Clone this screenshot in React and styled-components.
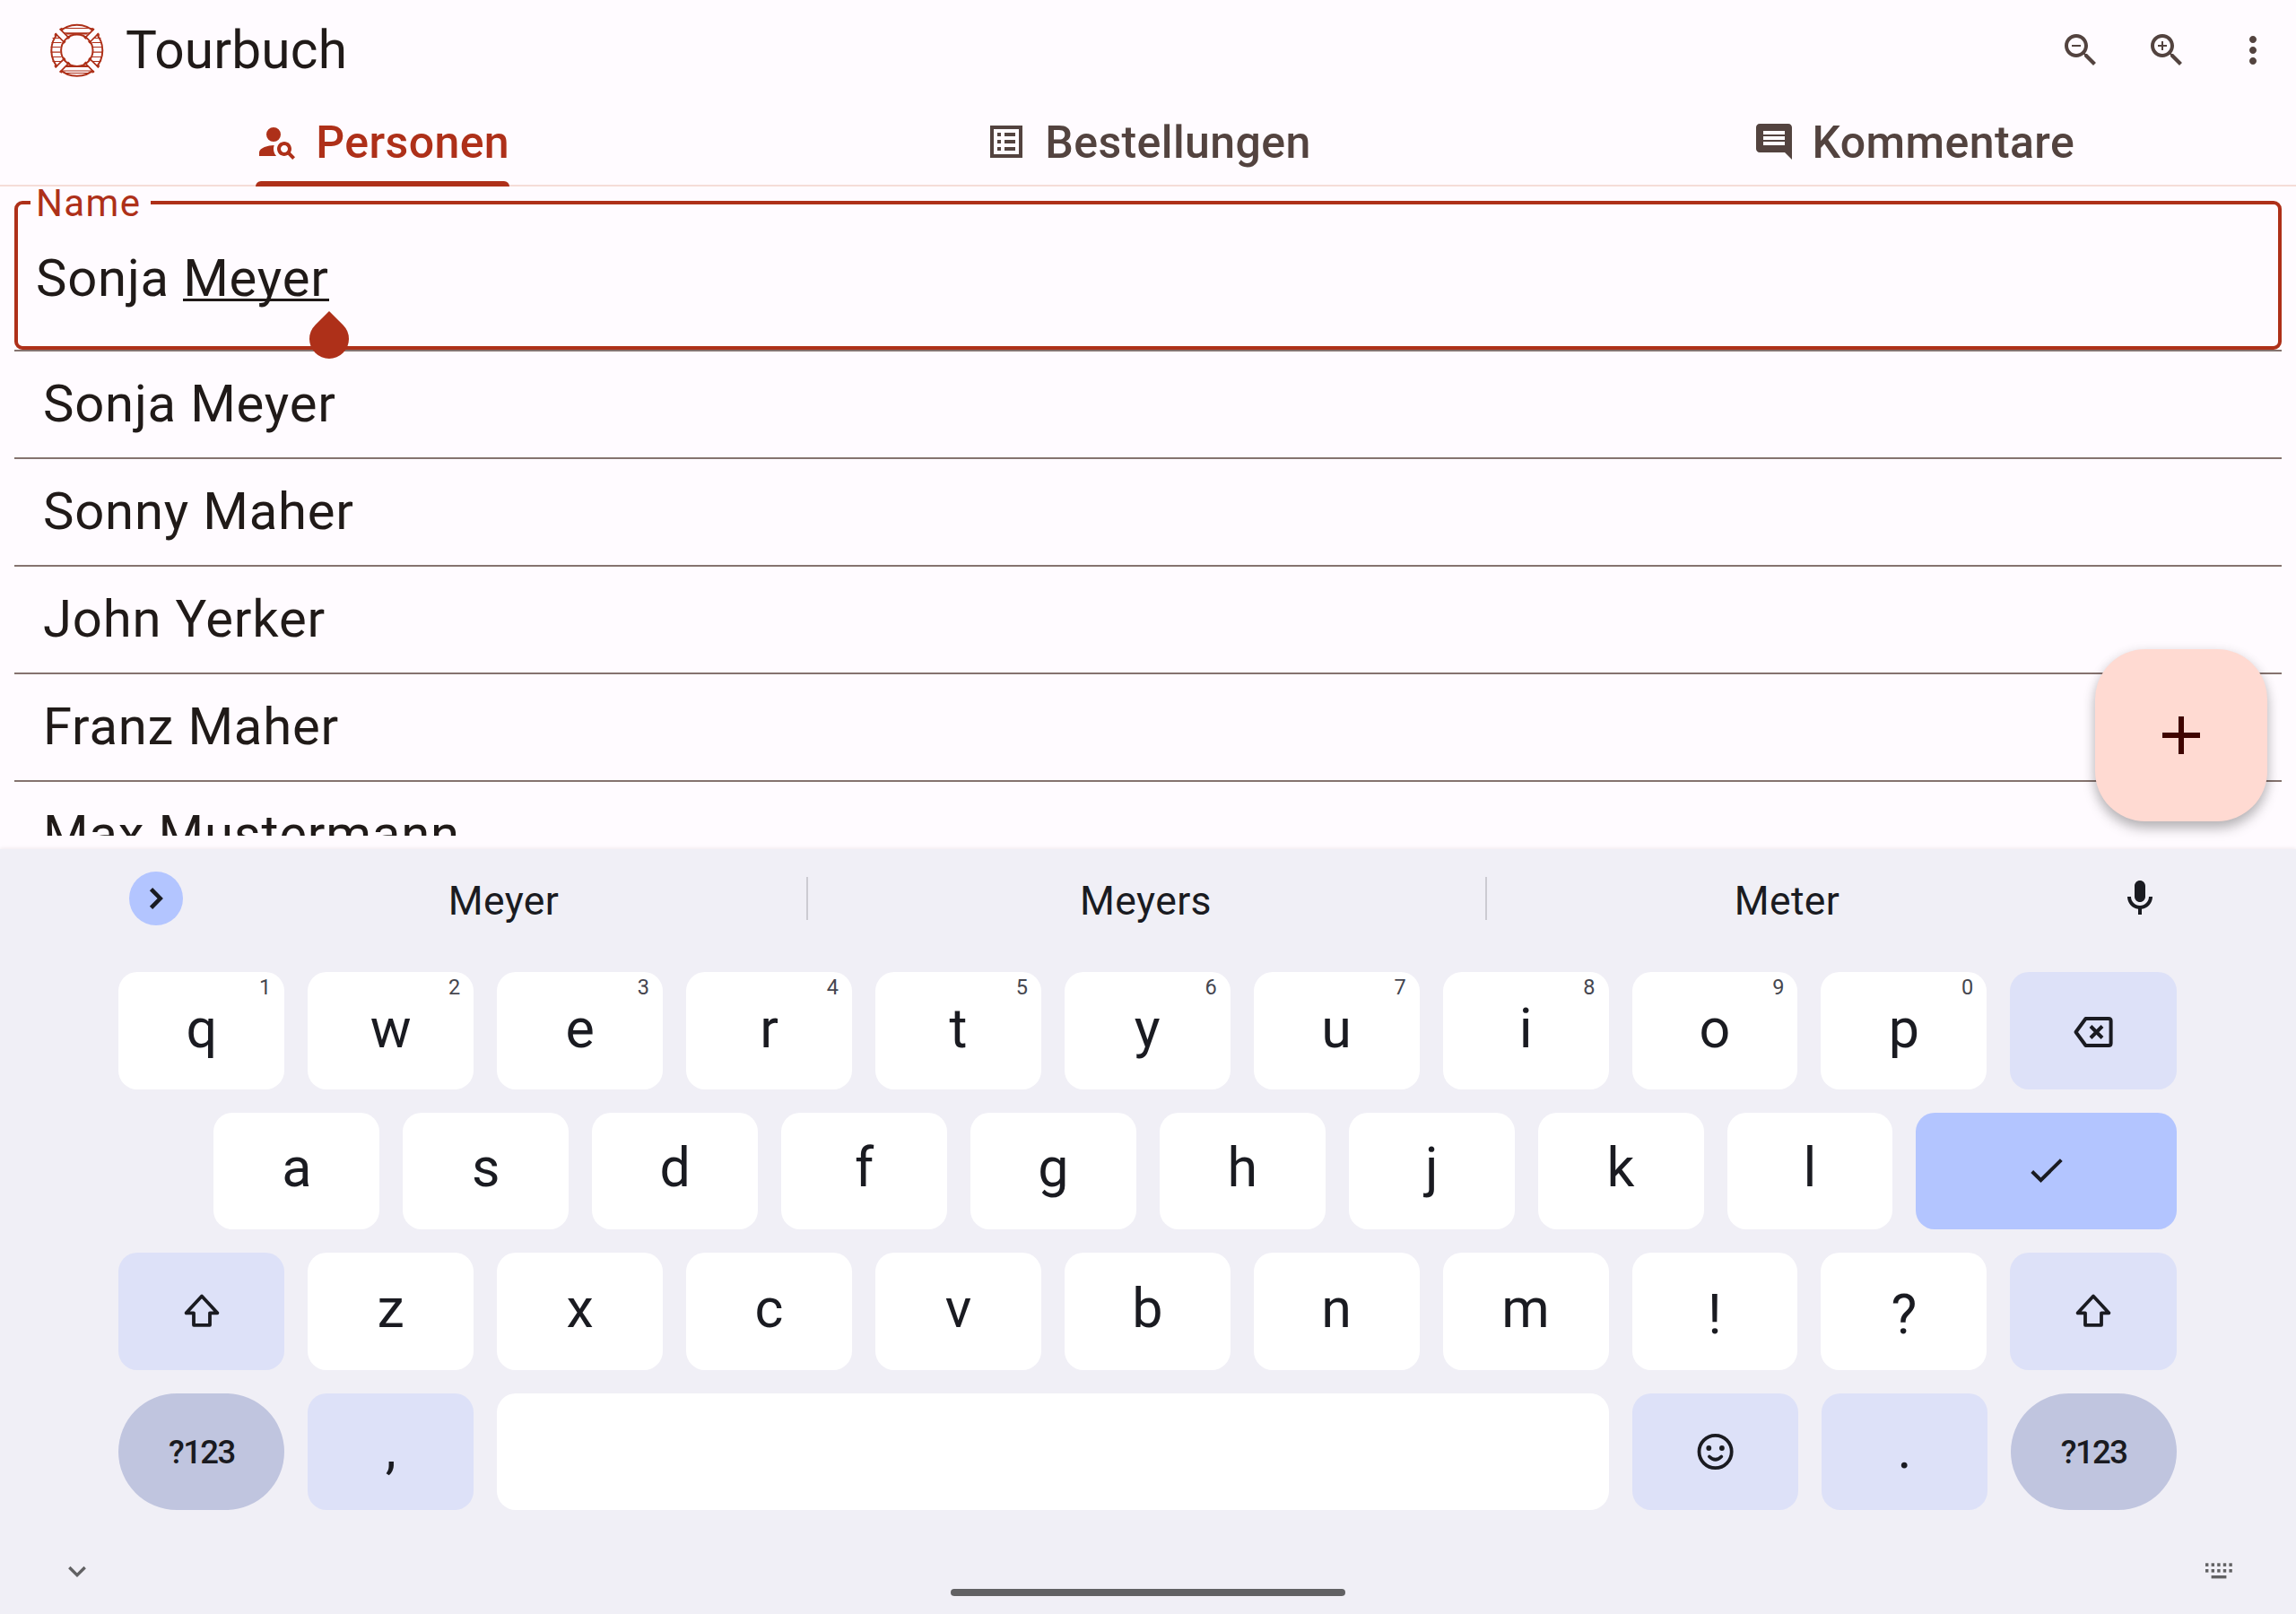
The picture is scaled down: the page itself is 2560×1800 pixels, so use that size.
import React from "react";
import styled, { createGlobalStyle, css } from "styled-components";

const c = {
  surface: "#fffbff",
  ink: "#201a18",
  muted: "#53433f",
  primary: "#ae3019",
  outline: "#85736f",
  divider: "#f5ddd8",
  fab: "#ffdad2",
  onFab: "#3f0400",
  kbBg: "#f0eff6",
  key: "#ffffff",
  keySoft: "#dde1f8",
  keyAccent: "#b3c5ff",
  keyDim: "#c0c5df",
  keyInk: "#1a1b21",
  hint: "#45464f",
  nav: "#616163",
};

const GlobalStyle = createGlobalStyle`
  html, body { margin: 0; padding: 0; }
  *, *::before, *::after { box-sizing: border-box; }
  body { font-family: Roboto, "Liberation Sans", sans-serif; color: ${c.ink}; background: ${c.surface}; }
  svg { display: block; flex: none; }
`;

const Screen = styled.div`
  width: 2560px;
  height: 1800px;
  display: flex;
  flex-direction: column;
  overflow: hidden;
  background: ${c.surface};
`;

const TopBar = styled.header`
  height: 112px;
  flex: none;
  display: flex;
  align-items: center;
  padding: 0 0 0 45px;
`;

const Title = styled.h1`
  margin: 0 0 0 14px;
  flex: 1;
  font-size: 58.6px;
  font-weight: 400;
  letter-spacing: 0.15px;
  line-height: 76px;
`;

const Action = styled.button`
  width: 96px;
  height: 96px;
  border: 0;
  padding: 0;
  background: none;
  color: ${c.muted};
  display: flex;
  align-items: center;
  justify-content: center;
`;

const Tabs = styled.nav`
  height: 96px;
  flex: none;
  display: grid;
  grid-template-columns: repeat(3, 1fr);
  border-bottom: 2px solid ${c.divider};
`;

const Tab = styled.div`
  display: flex;
  justify-content: center;
  height: 96px;
  color: ${(p) => (p.$active ? c.primary : c.muted)};
`;

const TabContent = styled.div`
  display: flex;
  align-items: center;
  gap: 19px;
  height: 96px;
  padding-bottom: 4px;
  font-size: 50px;
  font-weight: 500;
  letter-spacing: 0.4px;
  position: relative;
  ${(p) =>
    p.$active &&
    css`
      &::after {
        content: "";
        position: absolute;
        left: 0;
        right: 0;
        bottom: 0;
        height: 6px;
        border-radius: 6px 6px 0 0;
        background: ${c.primary};
      }
    `}
`;

const TabLabel = styled.span`
  padding-top: 2px;
`;

const Content = styled.main`
  position: relative;
  height: 739px;
  flex: none;
  display: flex;
  flex-direction: column;
  padding: 16px 16px 15px;
`;

const Field = styled.div`
  position: relative;
  height: 166px;
  flex: none;
  display: flex;
  align-items: center;
  padding: 6px 0 0 20px;
  border: 4px solid ${c.primary};
  border-radius: 9px;
  font-size: 58px;
  letter-spacing: 0.8px;
`;

const FieldLabel = styled.label`
  position: absolute;
  left: 14px;
  top: -18px;
  width: 134px;
  height: 34px;
  padding-left: 6px;
  background: ${c.surface};
  color: ${c.primary};
  font-size: 42px;
  line-height: 34px;
  letter-spacing: 1.4px;
`;

const FieldText = styled.span`
  white-space: pre;
`;

const Composing = styled.span`
  position: relative;
  display: inline-block;
  &::after {
    content: "";
    position: absolute;
    left: 0;
    right: 0;
    bottom: 8px;
    height: 3px;
    background: ${c.ink};
  }
`;

const CursorHandle = styled.i`
  position: absolute;
  left: 100%;
  top: 80px;
  width: 44px;
  height: 44px;
  margin-left: -22px;
  border-radius: 0 50% 50% 50%;
  background: ${c.primary};
  transform: rotate(45deg);
  z-index: 2;
`;

const List = styled.ul`
  list-style: none;
  margin: 0;
  padding: 0;
  flex: 1;
  min-height: 0;
  overflow: hidden;
`;

const Row = styled.li`
  height: 120px;
  display: flex;
  align-items: center;
  padding: 0 0 2px 32px;
  border-top: 2px solid ${c.outline};
  font-size: 58px;
  letter-spacing: 0.8px;
`;

const Fab = styled.button`
  position: absolute;
  right: 32px;
  top: 516px;
  width: 192px;
  height: 192px;
  padding: 0;
  border: 0;
  border-radius: 56px;
  background: ${c.fab};
  color: ${c.onFab};
  display: flex;
  align-items: center;
  justify-content: center;
  box-shadow: 0 8px 14px rgba(0, 0, 0, 0.25), 0 2px 14px rgba(0, 0, 0, 0.08);
`;

const Keyboard = styled.section`
  flex: 1;
  display: flex;
  flex-direction: column;
  background: ${c.kbBg};
  color: ${c.keyInk};
  box-shadow: 0 -1px 4px rgba(60, 20, 20, 0.08);
  position: relative;
`;

const Suggestions = styled.div`
  height: 137px;
  flex: none;
  display: flex;
  padding: 25px 133px 0 144px;
`;

const Expand = styled.button`
  width: 60px;
  height: 60px;
  margin-right: 22px;
  padding: 0 0 0 2px;
  border: 0;
  border-radius: 50%;
  background: ${c.keyAccent};
  color: ${c.keyInk};
  display: flex;
  align-items: center;
  justify-content: center;
`;

const Suggestion = styled.div`
  width: ${(p) => p.$w}px;
  height: 65px;
  text-align: center;
  font-size: 44.5px;
  letter-spacing: 0.4px;
  line-height: 65px;
  padding: 1px 2px 0 0;
`;

const Separator = styled.div`
  width: 2px;
  height: 48px;
  margin-top: 6px;
  background: #cccbd2;
`;

const Mic = styled.div`
  margin: 6px 0 0 33px;
`;

const Keys = styled.div`
  height: 600px;
  flex: none;
  display: flex;
  flex-direction: column;
  gap: 26px;
  padding: 0 133px 0 132.4px;
`;

const KeyRow = styled.div`
  flex: 1;
  display: flex;
  gap: 26px;
  padding-left: ${(p) => (p.$indent ? 106 : 0)}px;
`;

const toneBg = { plain: c.key, soft: c.keySoft, accent: c.keyAccent, dim: c.keyDim };

const Key = styled.button`
  position: relative;
  flex: ${(p) => (p.$grow ? "1 1 0" : "none")};
  width: 184.9px;
  padding: ${(p) => (p.$drop > 0 ? p.$drop : 0)}px 0 ${(p) => (p.$drop < 0 ? -p.$drop : 0)}px;
  border: 0;
  border-radius: ${(p) => (p.$tone === "dim" ? 66 : 21)}px;
  background: ${(p) => toneBg[p.$tone || "plain"]};
  color: ${c.keyInk};
  font-family: inherit;
  font-size: 61px;
  line-height: 72px;
  display: flex;
  align-items: center;
  justify-content: center;
`;

const Hint = styled.span`
  position: absolute;
  top: 4px;
  right: 15px;
  font-size: 23.5px;
  line-height: 26px;
  color: ${c.hint};
`;

const ModeLabel = styled.span`
  font-size: 36.5px;
  font-weight: 500;
  letter-spacing: -1.6px;
`;

const NavBar = styled.footer`
  flex: 1;
  display: flex;
  justify-content: space-between;
  padding: 53px 68px 0 68px;
  color: ${c.nav};
`;

const HomePill = styled.div`
  width: 440px;
  height: 8px;
  margin-top: 35px;
  border-radius: 4px;
  background: ${c.nav};
`;

const Glyph = ({ d, size = 48, box = "0 0 24 24" }) => (
  <svg width={size} height={size} viewBox={box} fill="currentColor">
    <path d={d} fillRule="evenodd" />
  </svg>
);

const icons = {
  person:
    "M10 4a4 4 0 1 0 0 8 4 4 0 0 0 0-8zM10.35 14.01C7.62 13.91 2 15.27 2 18v2h9.54c-2.47-2.76-1.23-5.89-1.19-5.99zM19.43 18.02c.36-.59.57-1.28.57-2.02 0-2.21-1.79-4-4-4s-4 1.79-4 4 1.79 4 4 4c.74 0 1.43-.22 2.02-.57L20.59 22 22 20.59l-2.57-2.57zM16 18c-1.1 0-2-.9-2-2s.9-2 2-2 2 .9 2 2-.9 2-2 2z",
  list: "M3 3h18v18H3zM5 5v14h14V5zM7 7h2v2H7zM11 7h6v2h-6zM7 11h2v2H7zM11 11h6v2h-6zM7 15h2v2H7zM11 15h6v2h-6z",
  comment:
    "M21.99 4c0-1.1-.89-2-1.99-2H4c-1.1 0-2 .9-2 2v12c0 1.1.9 2 2 2h14l4 4-.01-18zM18 14H6v-2h12v2zm0-3H6V9h12v2zm0-3H6V6h12v2z",
  zoomOut:
    "M15.5 14h-.79l-.28-.27C15.41 12.59 16 11.11 16 9.5 16 5.91 13.09 3 9.5 3S3 5.91 3 9.5 5.91 16 9.5 16c1.61 0 3.09-.59 4.23-1.57l.27.28v.79l5 4.99L20.49 19l-4.99-5zm-6 0C7.01 14 5 11.99 5 9.5S7.01 5 9.5 5 14 7.01 14 9.5 11.99 14 9.5 14zM7 9h5v1H7z",
  zoomIn:
    "M15.5 14h-.79l-.28-.27C15.41 12.59 16 11.11 16 9.5 16 5.91 13.09 3 9.5 3S3 5.91 3 9.5 5.91 16 9.5 16c1.61 0 3.09-.59 4.23-1.57l.27.28v.79l5 4.99L20.49 19l-4.99-5zm-6 0C7.01 14 5 11.99 5 9.5S7.01 5 9.5 5 14 7.01 14 9.5 11.99 14 9.5 14zM7 9h2V7h1v2h2v1h-2v2H9v-2H7z",
  more: "M12 8c1.1 0 2-.9 2-2s-.9-2-2-2-2 .9-2 2 .9 2 2 2zm0 2c-1.1 0-2 .9-2 2s.9 2 2 2 2-.9 2-2-.9-2-2-2zm0 6c-1.1 0-2 .9-2 2s.9 2 2 2 2-.9 2-2-.9-2-2-2z",
  plus: "M19 13h-6v6h-2v-6H5v-2h6V5h2v6h6v2z",
  mic: "M12 14c1.66 0 3-1.34 3-3V5c0-1.66-1.34-3-3-3S9 3.34 9 5v6c0 1.66 1.34 3 3 3zM17 11c0 2.76-2.24 5-5 5s-5-2.24-5-5H5c0 3.53 2.61 6.43 6 6.92V21h2v-3.08c3.39-.49 6-3.39 6-6.92z",
};

const Line = ({ w, h, sw = 4, children, cap = "butt", join = "miter" }) => (
  <svg
    width={w}
    height={h}
    viewBox={`0 0 ${w} ${h}`}
    fill="none"
    stroke="currentColor"
    strokeWidth={sw}
    strokeLinecap={cap}
    strokeLinejoin={join}
  >
    {children}
  </svg>
);

const ShiftIcon = () => (
  <Line w={44} h={44} sw={3.8} join="round">
    <path d="M22 5.5 4.6 24.3H13V37.8H31V24.3H39.4Z" />
  </Line>
);

const BackspaceIcon = () => (
  <Line w={46} h={38} join="round">
    <path d="M14.5 4H40Q42.6 4 42.6 6.5V31.5Q42.6 34 40 34H14.5L3.5 19Z" />
    <path d="M20 12.5 33 25.5M33 12.5 20 25.5" />
  </Line>
);

const CheckIcon = () => (
  <Line w={40} h={32} sw={4}>
    <path d="M3.7 16.5 13.5 26.2 36.3 3.6" />
  </Line>
);

const EmojiIcon = () => (
  <Line w={44} h={44} sw={3.8} cap="round">
    <circle cx="21.6" cy="22" r="18.1" />
    <circle cx="14.3" cy="18" r="2.9" fill="currentColor" stroke="none" />
    <circle cx="28.9" cy="18" r="2.9" fill="currentColor" stroke="none" />
    <path d="M14.9 27.5Q21.6 34 28.3 27.5" />
  </Line>
);

const Lifebuoy = () => (
  <svg width="81" height="80" viewBox="0 0 80 80" fill="none" stroke={c.primary}>
    <g strokeWidth="1.2">
      <path d="M24 15.5H57M22 20.8H59M28 21.8H52" />
      <path d="M13 26.5H25M12 31.5H23M11 36.5H22M11 42.2H22M12 47.5H23M13 52.5H26" />
      <path d="M55 26.5H67M57 31.5H68M58 36.5H69M58 42.2H69M57 47.5H68M54 52.5H67" />
      <path d="M28 57.500H52M22 58.500H59M23 63H57M27 65.500H54" />
    </g>
    <circle cx="40.3" cy="40.3" r="28.500" strokeWidth="2" />
    <circle cx="40.3" cy="40.3" r="17.700" fill={c.surface} strokeWidth="2" />
    {[45, 135, 225, 315].map((a) => (
      <g key={a} transform={`rotate(${a} 40.3 40.3)`}>
        <rect x="59" y="37.3" width="12" height="6" fill={c.surface} stroke="none" />
        <path d="M56 36.700H71M56 43.900H71" strokeWidth="1.700" />
        <path d="M56.800 35V38.600M56.800 42V45.600M69.800 34.500V37.500M69.800 43.100V46.100" strokeWidth="1.700" />
      </g>
    ))}
  </svg>
);

const people = ["Sonja Meyer", "Sonny Maher", "John Yerker", "Franz Maher", "Max Mustermann"];

export default function App() {
  return (
    <>
      <GlobalStyle />
      <Screen>
        <TopBar>
          <Lifebuoy />
          <Title>Tourbuch</Title>
          <Action aria-label="Verkleinern"><Glyph d={icons.zoomOut} /></Action>
          <Action aria-label="Vergrößern"><Glyph d={icons.zoomIn} /></Action>
          <Action aria-label="Menü"><Glyph d={icons.more} /></Action>
        </TopBar>
        <Tabs>
          <Tab $active>
            <TabContent $active><Glyph d={icons.person} /><TabLabel>Personen</TabLabel></TabContent>
          </Tab>
          <Tab>
            <TabContent><Glyph d={icons.list} /><TabLabel>Bestellungen</TabLabel></TabContent>
          </Tab>
          <Tab>
            <TabContent><Glyph d={icons.comment} /><TabLabel>Kommentare</TabLabel></TabContent>
          </Tab>
        </Tabs>
        <Content>
          <Field>
            <FieldLabel>Name</FieldLabel>
            <FieldText>
              {"Sonja "}
              <Composing>Meyer<CursorHandle /></Composing>
            </FieldText>
          </Field>
          <List>
            {people.map((name) => <Row key={name}>{name}</Row>)}
          </List>
          <Fab aria-label="Hinzufügen"><Glyph d={icons.plus} size={72} /></Fab>
        </Content>
        <Keyboard>
          <Suggestions>
            <Expand aria-label="Mehr">
              <Line w={20} h={28} sw={4.6}><path d="M3.5 3.6 13.7 14 3.5 24.4" /></Line>
            </Expand>
            <Suggestion $w={673}>Meyer</Suggestion>
            <Separator />
            <Suggestion $w={755}>Meyers</Suggestion>
            <Separator />
            <Suggestion $w={671}>Meter</Suggestion>
            <Mic><Glyph d={icons.mic} /></Mic>
          </Suggestions>
          <Keys>
            <KeyRow>
              {[..."qwertyuiop"].map((k, i) => (
                <Key key={k} $drop={-5}>{k}<Hint>{(i + 1) % 10}</Hint></Key>
              ))}
              <Key $tone="soft" $drop={3} $grow><BackspaceIcon /></Key>
            </KeyRow>
            <KeyRow $indent>
              {[..."asdfghjkl"].map((k) => <Key key={k} $drop={-7}>{k}</Key>)}
              <Key $tone="accent" $drop={0} $grow><CheckIcon /></Key>
            </KeyRow>
            <KeyRow>
              <Key $tone="soft" $drop={0}><ShiftIcon /></Key>
              {[..."zxcvbnm"].map((k) => <Key key={k} $drop={-6}>{k}</Key>)}
              <Key $drop={7}>!</Key>
              <Key $drop={7}>?</Key>
              <Key $tone="soft" $drop={0} $grow><ShiftIcon /></Key>
            </KeyRow>
            <KeyRow>
              <Key $tone="dim" $drop={3}><ModeLabel>?123</ModeLabel></Key>
              <Key $tone="soft" $drop={-5}>,</Key>
              <Key $grow aria-label="Leertaste" />
              <Key $tone="soft" $drop={0}><EmojiIcon /></Key>
              <Key $tone="soft" $drop={-5}>.</Key>
              <Key $tone="dim" $drop={3}><ModeLabel>?123</ModeLabel></Key>
            </KeyRow>
          </Keys>
          <NavBar>
            <Line w={36} h={32} sw={3.4}><path d="M9.3 11 18 19.7 26.7 11" /></Line>
            <HomePill />
            <svg width="36" height="32" viewBox="0 0 36 32" fill="currentColor">
              {[0, 1, 2, 3, 4].map((i) => (
                <React.Fragment key={i}>
                  <rect x={3 + i * 6.6} y="6.3" width="3.4" height="3.6" />
                  <rect x={3 + i * 6.6} y="13" width="3.4" height="3.6" />
                </React.Fragment>
              ))}
              <rect x="9.6" y="20" width="16.8" height="3.4" />
            </svg>
          </NavBar>
        </Keyboard>
      </Screen>
    </>
  );
}
